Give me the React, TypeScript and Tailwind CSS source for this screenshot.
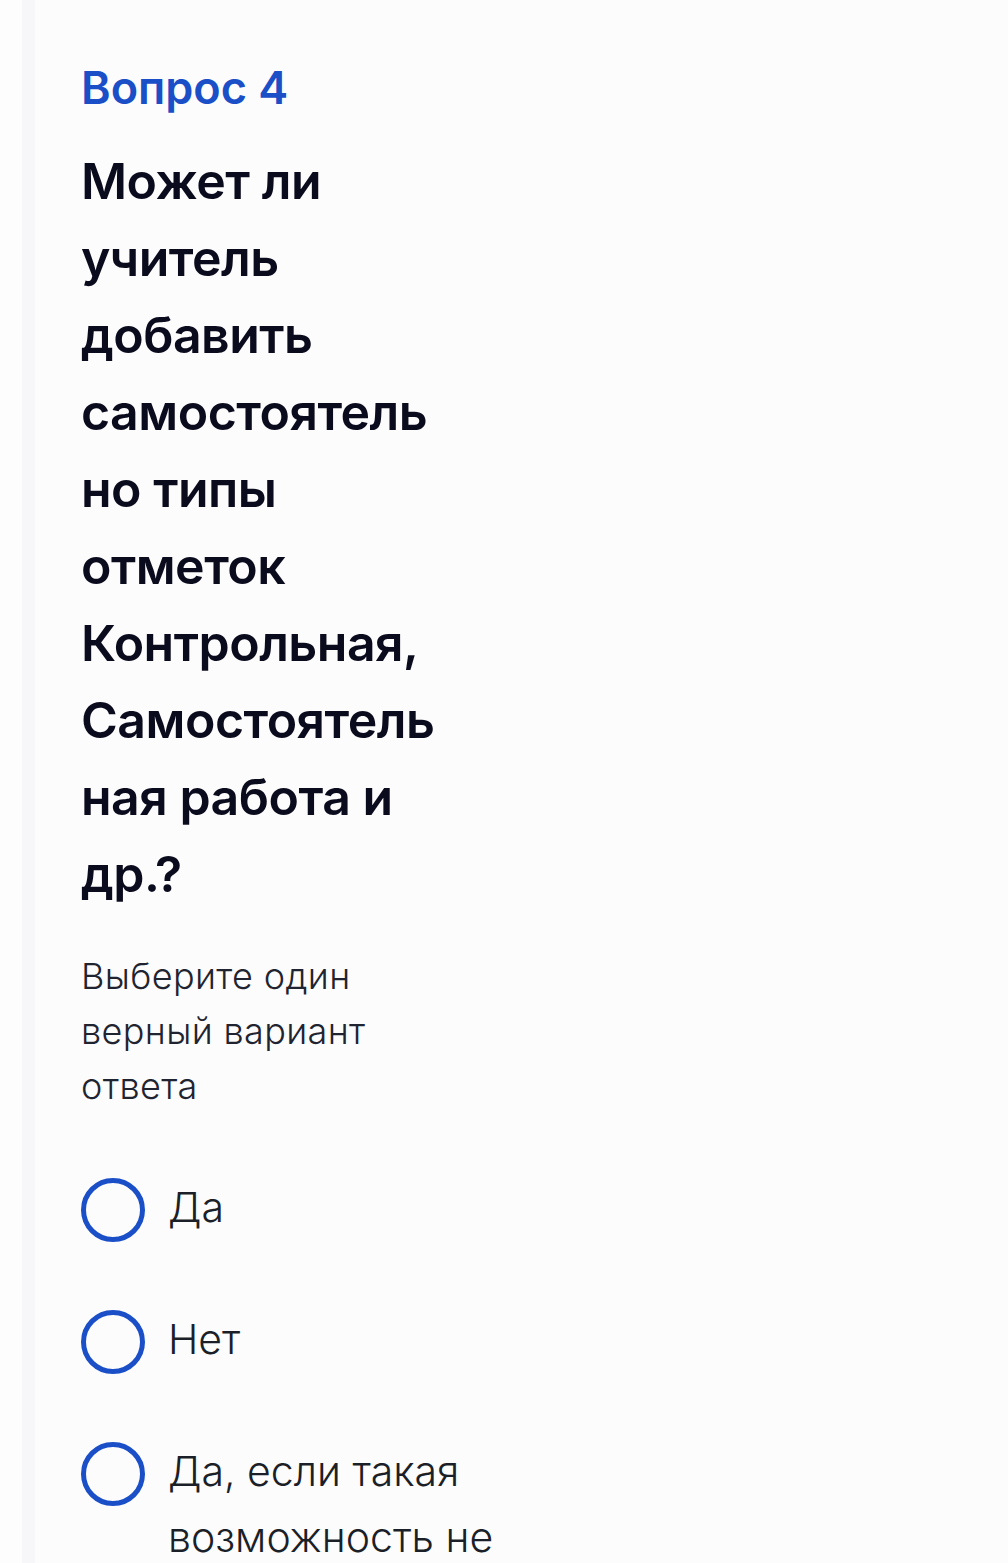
const headingLines = [
  'Может ли',
  'учитель',
  'добавить',
  'самостоятель',
  'но типы',
  'отметок',
  'Контрольная,',
  'Самостоятель',
  'ная работа и',
  'др.?',
];

const options: string[][] = [['Да'], ['Нет'], ['Да, если такая', 'возможность не']];

export default function App() {
  return (
    <div className="flex min-h-[1563px] bg-[#fdfdfd]" style={{ fontFamily: 'Inter, "Noto Sans", sans-serif' }}>
      <div className="w-[22px] shrink-0" />
      <div className="w-[13px] shrink-0 bg-[#f7f7f9]" />
      <div className="flex-1 bg-[#fcfcfd] pl-[46px] pt-[58px]">
        <div className="text-[45px] font-semibold leading-[60px] text-[#1a4fc8]">Вопрос 4</div>
        <h2 className="mt-[25px] text-[50px] font-semibold leading-[77px] tracking-[-0.01em] text-[#0b0b1e]">
          {headingLines.map((l) => (
            <span key={l} className="block whitespace-nowrap">{l}</span>
          ))}
        </h2>
        <p className="mt-[36px] w-[340px] text-[36px] font-light leading-[55px] tracking-[0.01em] text-[#1f2430]">
          Выберите один верный вариант ответа
        </p>
        <div className="mt-[60px] flex flex-col gap-[64px]">
          {options.map((o) => (
            <label key={o[0]} className="flex items-start gap-[23px]">
              <span className="mt-[4px] h-[64px] w-[64px] shrink-0 rounded-full border-[5px] border-[#1a4fc8]" />
              <span className="text-[41px] font-light leading-[66px] text-[#1b1f27]">
                {o.map((l) => (
                  <span key={l} className="block whitespace-nowrap">{l}</span>
                ))}
              </span>
            </label>
          ))}
        </div>
      </div>
    </div>
  );
}
